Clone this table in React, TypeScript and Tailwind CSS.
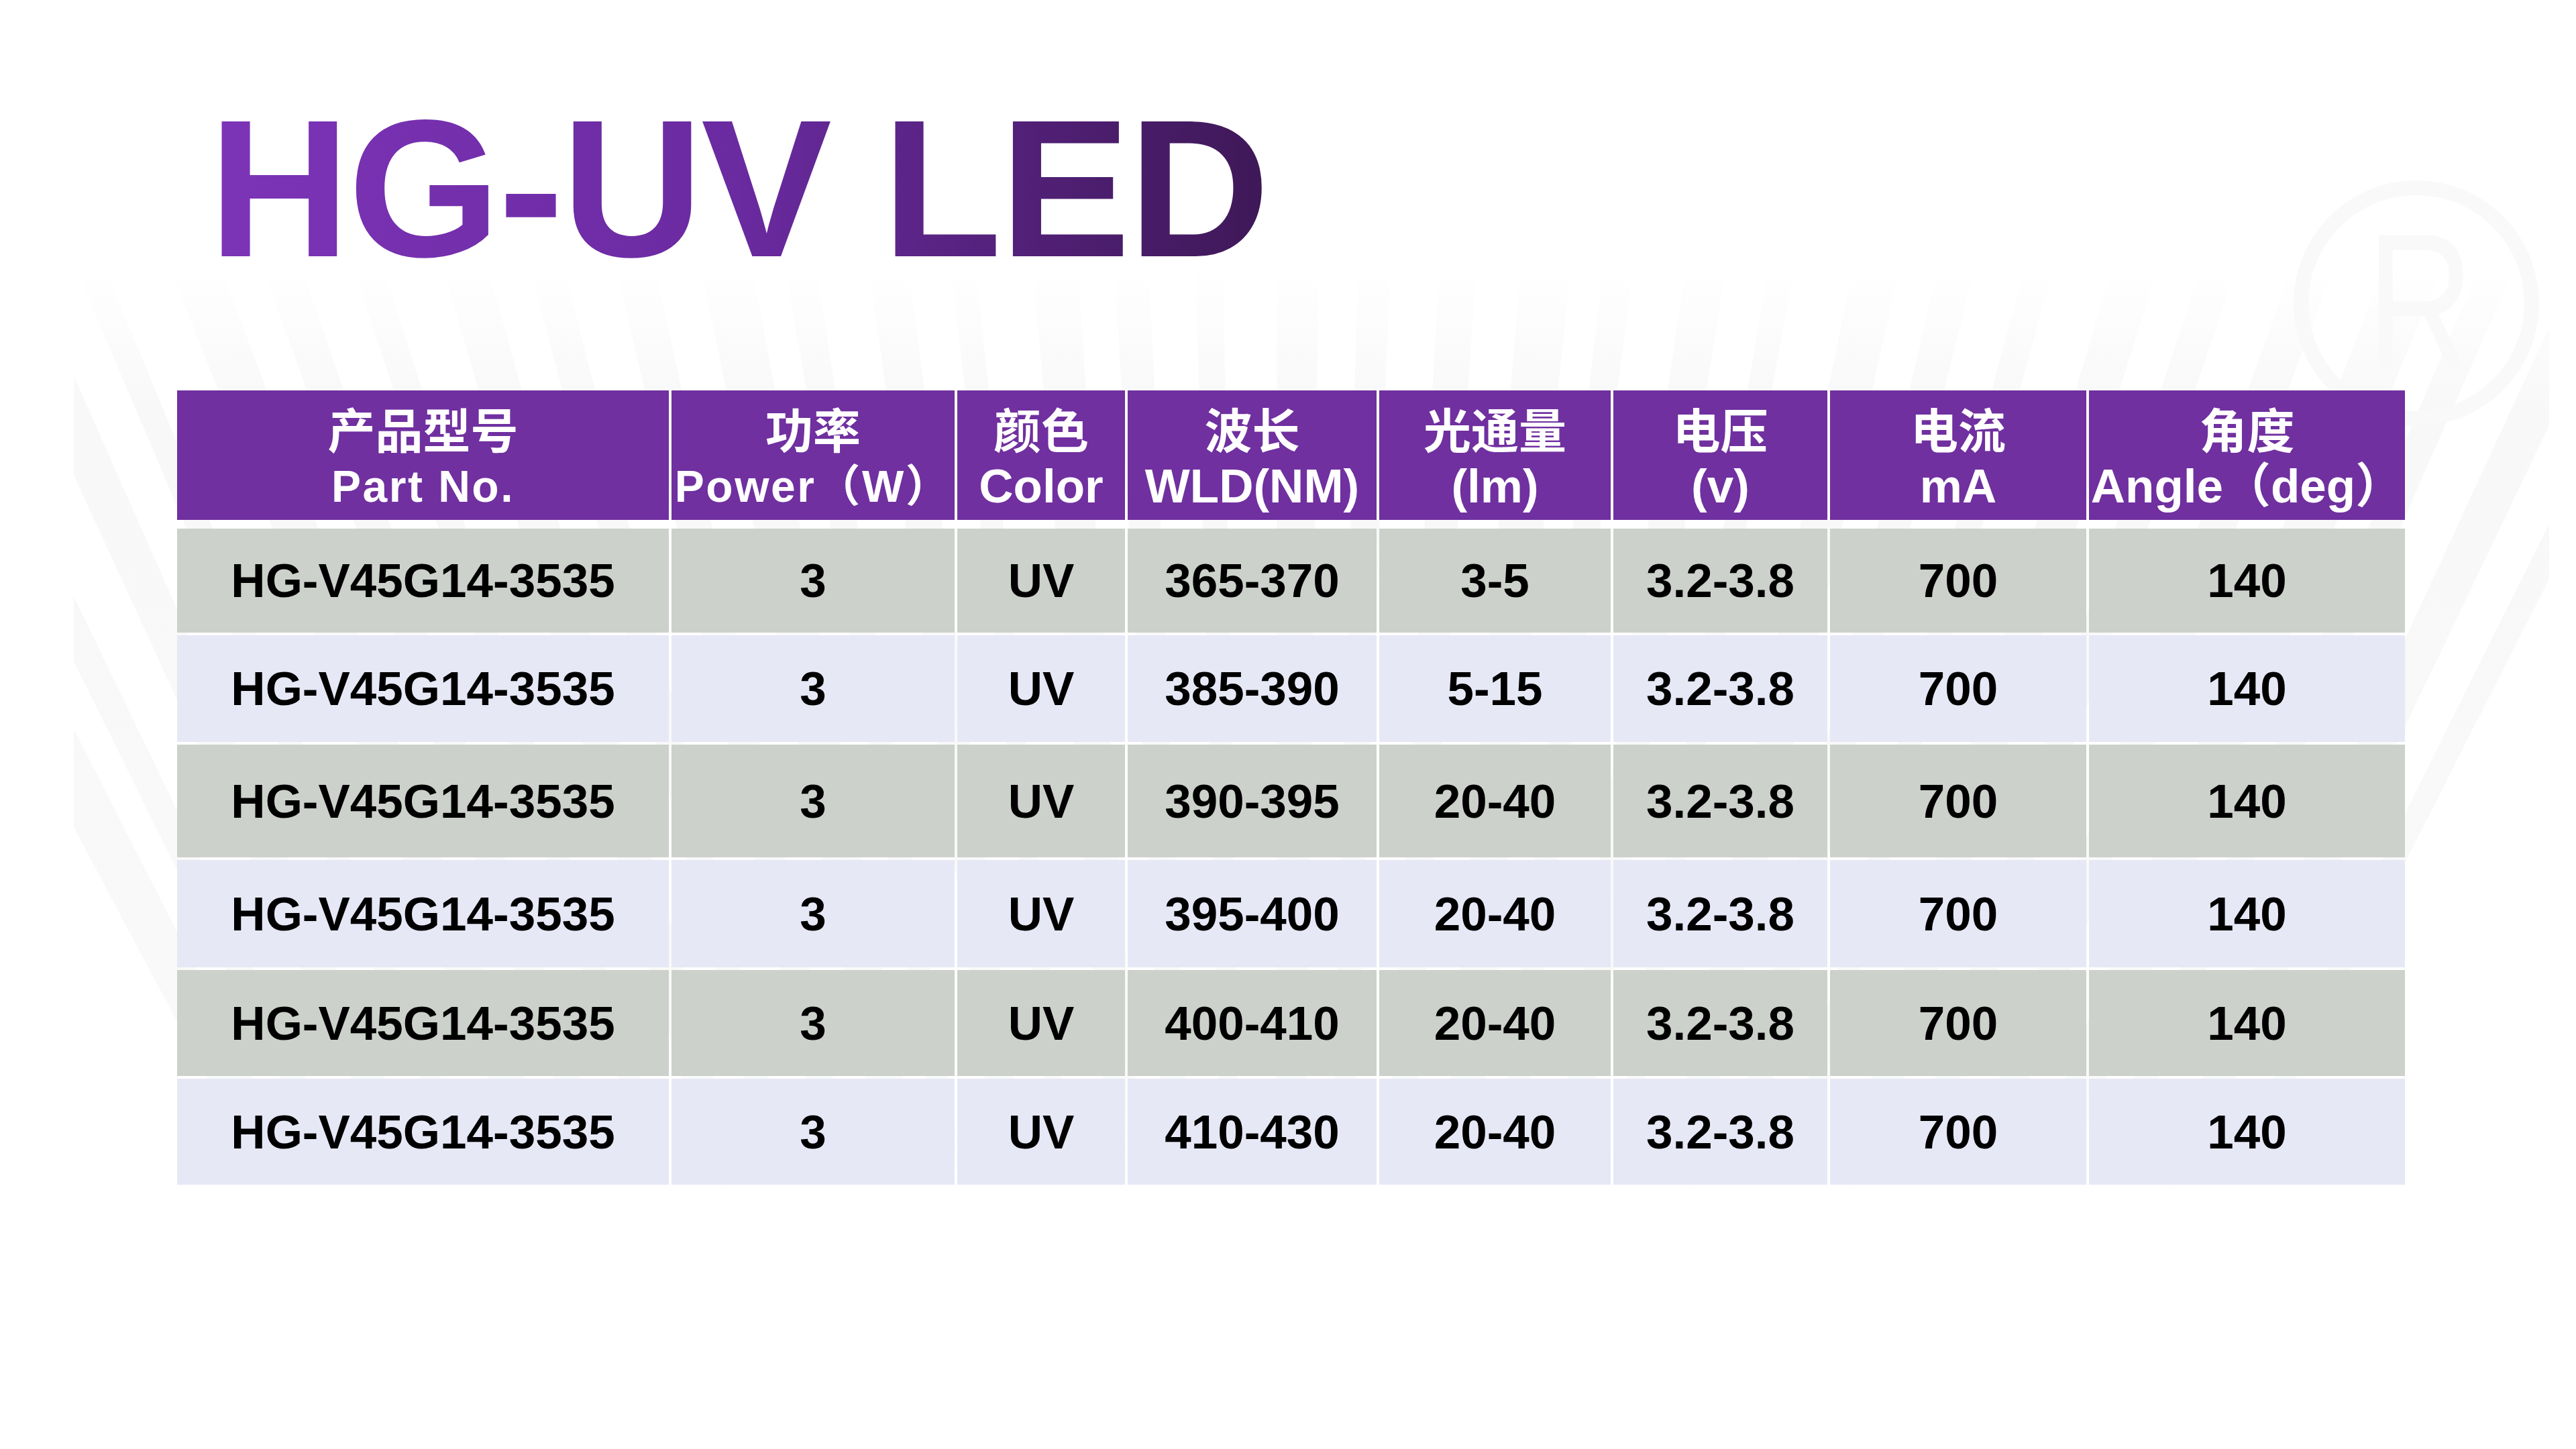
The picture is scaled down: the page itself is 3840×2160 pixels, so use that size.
import React from "react";

const rows = [
  ["HG-V45G14-3535", "3", "UV", "365-370", "3-5", "3.2-3.8", "700", "140"],
  ["HG-V45G14-3535", "3", "UV", "385-390", "5-15", "3.2-3.8", "700", "140"],
  ["HG-V45G14-3535", "3", "UV", "390-395", "20-40", "3.2-3.8", "700", "140"],
  ["HG-V45G14-3535", "3", "UV", "395-400", "20-40", "3.2-3.8", "700", "140"],
  ["HG-V45G14-3535", "3", "UV", "400-410", "20-40", "3.2-3.8", "700", "140"],
  ["HG-V45G14-3535", "3", "UV", "410-430", "20-40", "3.2-3.8", "700", "140"],
];

const rowHeights = ["h-[155px]", "h-[159px]", "h-[168px]", "h-[160px]", "h-[158px]", "h-[158px]"];

const headers: { zh: string; en: string; small?: boolean }[] = [
  { zh: "产品型号", en: "Part No.", small: true },
  { zh: "功率", en: "Power（W）", small: true },
  { zh: "颜色", en: "Color" },
  { zh: "波长", en: "WLD(NM)" },
  { zh: "光通量", en: "(lm)" },
  { zh: "电压", en: "(v)" },
  { zh: "电流", en: "mA" },
  { zh: "角度", en: "Angle（deg）" },
];

const cols = "grid-cols-[733px_422px_250px_371px_345px_319px_382px_471px]";

function Rays() {
  const cx = 1900;
  const cy = 4600;
  const r = 6000;
  const widths = [1.0, 0.6, 0.8, 0.5, 0.9, 0.7, 0.55, 0.85, 0.65, 0.75];
  const wedges: string[] = [];
  for (let i = 0; i < 34; i++) {
    const a0 = (-118 + i * 1.65) * (Math.PI / 180);
    const a1 = a0 + widths[i % widths.length] * (Math.PI / 180);
    const x0 = cx + r * Math.cos(a0);
    const y0 = cy + r * Math.sin(a0);
    const x1 = cx + r * Math.cos(a1);
    const y1 = cy + r * Math.sin(a1);
    wedges.push(`M${cx} ${cy} L${x0.toFixed(1)} ${y0.toFixed(1)} L${x1.toFixed(1)} ${y1.toFixed(1)} Z`);
  }
  return (
    <svg className="absolute inset-0" width="3840" height="2160" viewBox="0 0 3840 2160">
      <defs>
        <clipPath id="rayclip">
          <rect x="110" y="400" width="3690" height="1380" />
        </clipPath>
        <linearGradient id="rayfade" x1="0" y1="400" x2="0" y2="1780" gradientUnits="userSpaceOnUse">
          <stop offset="0" stopColor="#ffffff" />
          <stop offset="0.15" stopColor="#f8f8f8" />
          <stop offset="0.85" stopColor="#f9f9f9" />
          <stop offset="1" stopColor="#ffffff" />
        </linearGradient>
      </defs>
      <g clipPath="url(#rayclip)" fill="url(#rayfade)">
        {wedges.map((d, i) => (
          <path key={i} d={d} />
        ))}
      </g>
      <circle cx="3602" cy="452" r="172" fill="none" stroke="#f9f9f9" strokeWidth="22" />
      <text
        x="3528"
        y="557"
        fontFamily="Liberation Sans, sans-serif"
        fontSize="300"
        fill="#f9f9f9"
        textLength="160"
        lengthAdjust="spacingAndGlyphs"
      >
        R
      </text>
    </svg>
  );
}

export default function App() {
  return (
    <div className="relative w-[3840px] h-[2160px] overflow-hidden bg-white font-['Liberation_Sans','Noto_Sans_CJK_SC',sans-serif]">
      <Rays />
      <div className="relative">
        <div className="pt-[135px] pl-[311px]">
          <span className="inline-block bg-linear-to-r from-[#7d34b8] via-[#6a2aa0] to-[#3e1857] bg-clip-text text-transparent text-[292px] leading-[292px] font-bold tracking-[-3px]">
            HG-UV LED
          </span>
        </div>

        <div className="mt-[155px] ml-[264px] w-[3321px]">
          <div className={`grid ${cols} gap-x-[4px]`}>
            {headers.map((h, i) => (
              <div key={i} className="h-[193px] bg-[#7030a0] text-white flex flex-col items-center pt-[14px] whitespace-nowrap">
                <div className="font-['Noto_Sans_CJK_SC',sans-serif] font-bold text-[71px] leading-[82px]">{h.zh}</div>
                <div
                  className={
                    h.small
                      ? "mt-[6px] font-bold text-[66px] leading-[82px] tracking-[2.5px]"
                      : "mt-[6px] font-bold text-[71px] leading-[82px]"
                  }
                >
                  {h.en}
                </div>
              </div>
            ))}
          </div>

          <div className={`mt-[13px] grid ${cols} gap-x-[4px] gap-y-[4px]`}>
            {rows.map((r, ri) =>
              r.map((c, ci) => (
                <div
                  key={`${ri}-${ci}`}
                  className={`${rowHeights[ri]} ${ri % 2 === 0 ? "bg-[#ccd1cb]" : "bg-[#e6e8f6]"} flex items-center justify-center text-black font-bold text-[71px] leading-none whitespace-nowrap`}
                >
                  {c}
                </div>
              ))
            )}
          </div>
        </div>
      </div>
    </div>
  );
}
